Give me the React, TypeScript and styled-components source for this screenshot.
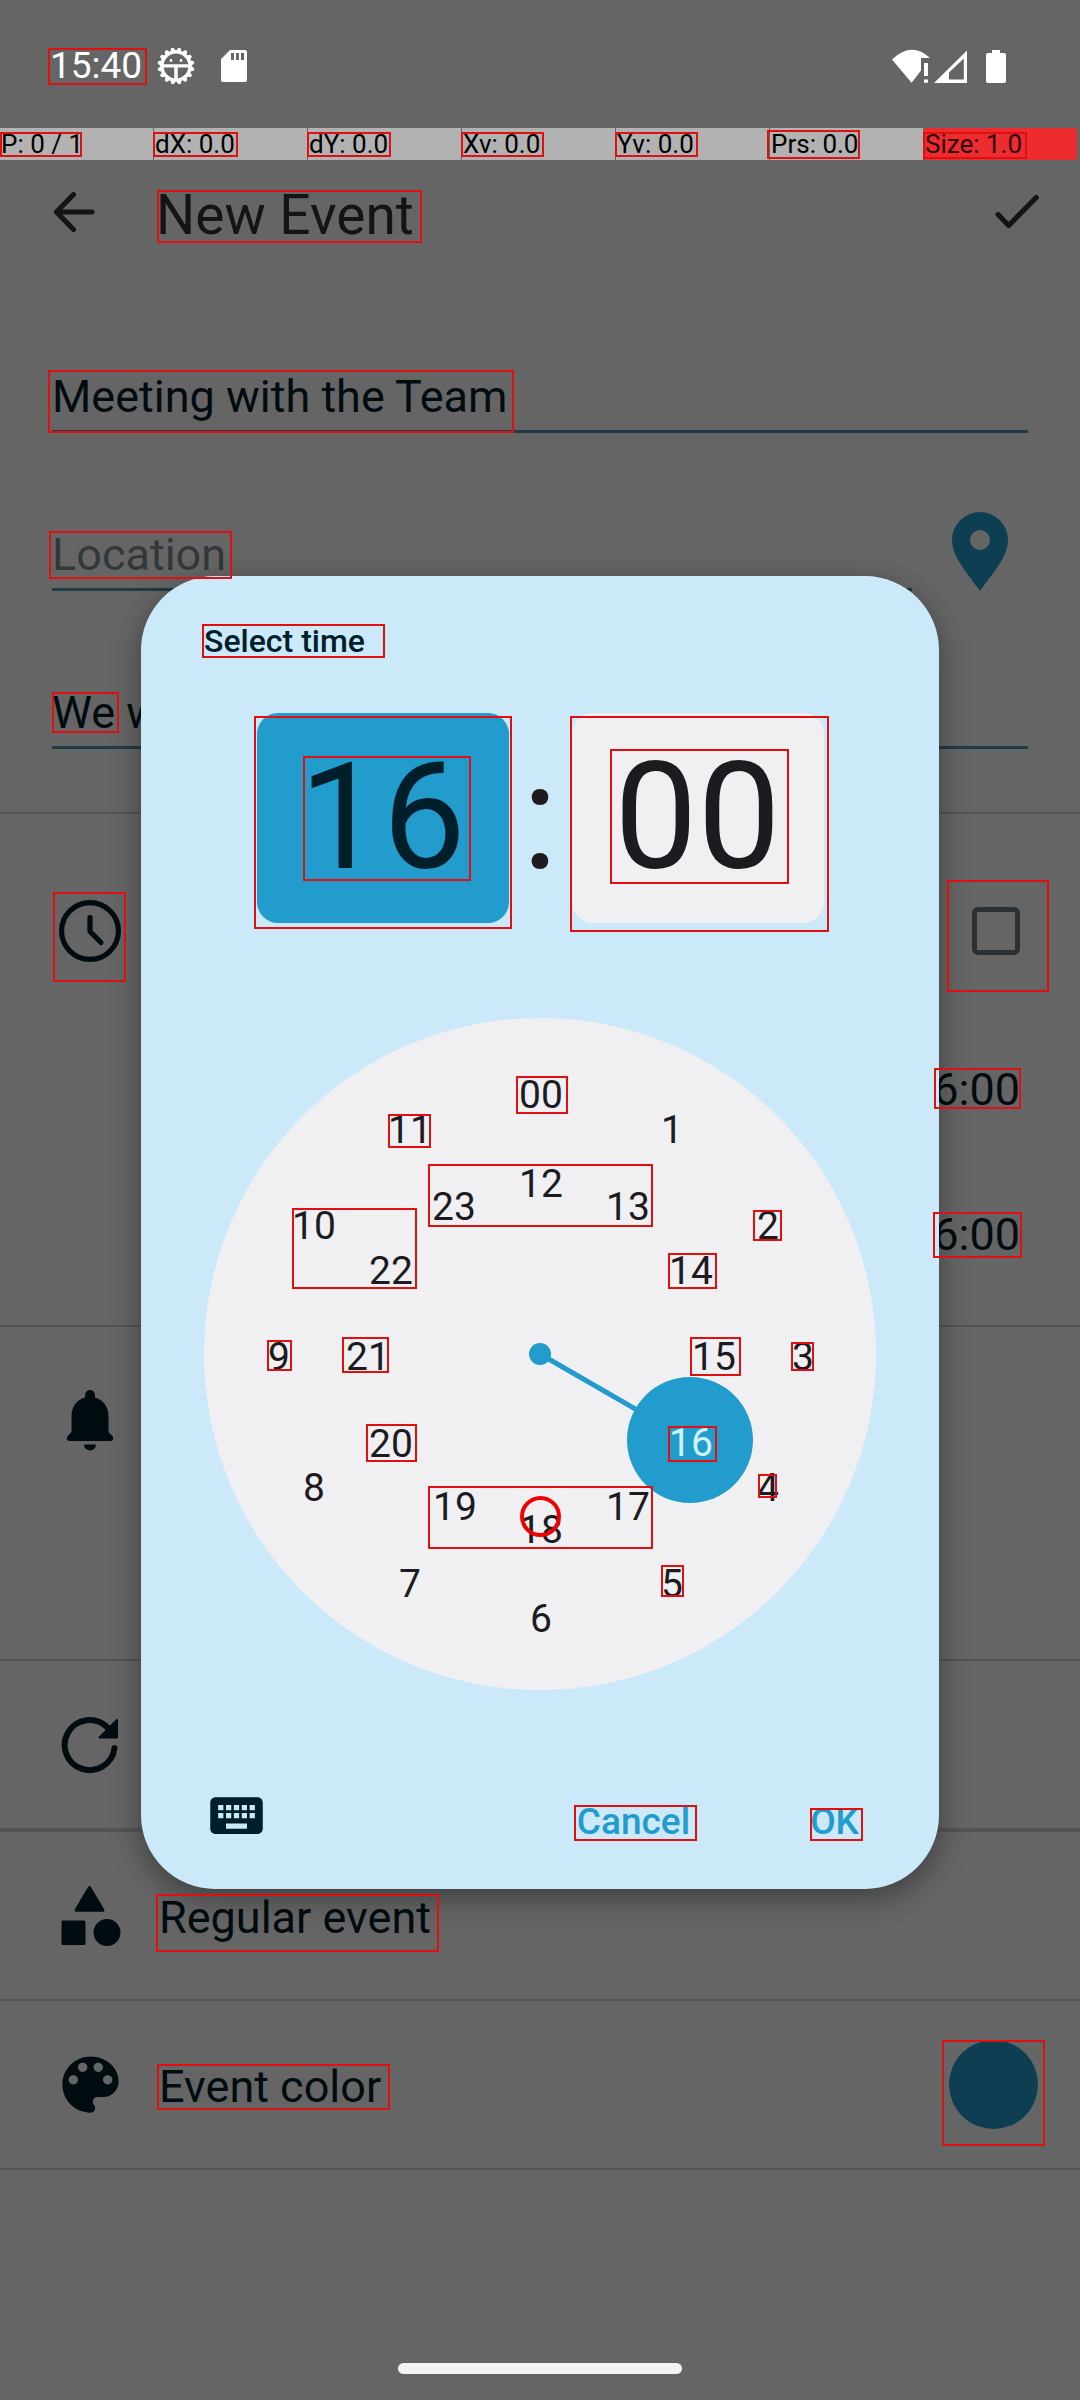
import React from "react";
import styled, { createGlobalStyle } from "styled-components";
import { MdKeyboard } from "react-icons/md";

const color = {
  page: "#fdfdfd",
  ink: "#001f2a",
  title: "#343434",
  primary: "#229bcd",
  underline: "#4e93b0",
  divider: "#d2d2d2",
  sheet: "#cce9fa",
  face: "#f0f0f3",
  digit: "#1c1b1f",
  mark: "#e01010",
};

const GlobalStyle = createGlobalStyle`
  *, *::before, *::after { box-sizing: border-box; }
  body { margin: 0; background: ${color.page}; font-family: Roboto, "Liberation Sans", sans-serif; }
  button, input { font: inherit; color: inherit; }
  button { border: 0; padding: 0; background: none; cursor: pointer; }
`;

const Screen = styled.div`
  position: relative;
  min-height: 100vh;
  overflow: hidden;
  color: ${color.ink};
`;

/* ---------- system bars ---------- */

const StatusBar = styled.header`
  position: relative;
  z-index: 2;
  display: flex;
  align-items: center;
  justify-content: space-between;
  height: 128px;
  padding: 4px 74px 0 50px;
  color: #fff;
`;

const StatusGroup = styled.div<{ $gap: number }>`
  display: flex;
  align-items: center;
  gap: ${(p) => p.$gap}px;
`;

const Clock = styled.time`
  font-size: 37px;
  line-height: 44px;
`;

const PointerBar = styled.div`
  position: relative;
  z-index: 2;
  display: grid;
  grid-template-columns: repeat(7, 1fr);
  gap: 1px;
  height: 32px;
  padding-right: 3px;
`;

const PointerCell = styled.span<{ $alert?: boolean }>`
  padding-left: 1px;
  font-size: 26px;
  line-height: 32px;
  white-space: nowrap;
  color: ${(p) => (p.$alert ? "#2e0607" : "#000")};
  background: ${(p) => (p.$alert ? "#ec2c2e" : "#b2b2b2")};
`;

const HomeHandle = styled.div`
  position: absolute;
  z-index: 4;
  left: 50%;
  bottom: 26px;
  width: 284px;
  height: 11px;
  margin-left: -142px;
  border-radius: 6px;
  background: #f3f3f3;
`;

/* ---------- event form ---------- */

const AppBar = styled.div`
  display: flex;
  align-items: center;
  height: 104px;
  padding: 0 15px 0 26px;
  color: ${color.title};
`;

const BarButton = styled.button`
  display: flex;
  align-items: center;
  justify-content: center;
  width: 96px;
  height: 96px;
`;

const Title = styled.h1`
  flex: 1;
  margin: 0;
  padding: 6px 0 0 34px;
  font-size: 55px;
  font-weight: 400;
  line-height: 64px;
`;

const Fields = styled.div`
  display: flex;
  flex-direction: column;
  gap: 96px;
  padding: 107px 52px 63px;
  border-bottom: 2px solid ${color.divider};
`;

const FieldRow = styled.div`
  display: flex;
  align-items: flex-end;
  height: 62px;
`;

const Field = styled.input`
  flex: 1;
  min-width: 0;
  height: 62px;
  padding: 0 0 9px;
  border: 0;
  border-bottom: 3px solid ${color.underline};
  border-radius: 0;
  outline: 0;
  background: none;
  font-size: 45px;
  line-height: 50px;
  &::placeholder {
    color: ${color.ink};
    opacity: 0.5;
  }
`;

const PinButton = styled.button`
  display: flex;
  align-items: flex-end;
  height: 60px;
  margin: 0 20px 0 40px;
  color: ${color.primary};
`;

const Section = styled.section<{ $pad?: string; $line?: number }>`
  padding: ${(p) => p.$pad ?? "0"};
  border-bottom: ${(p) => p.$line ?? 2}px solid ${color.divider};
`;

const Row = styled.div<{ $height: number; $right?: number }>`
  display: flex;
  align-items: center;
  gap: 31px;
  height: ${(p) => p.$height}px;
  padding: 0 ${(p) => p.$right ?? 60}px 0 52px;
`;

const IconSlot = styled.span`
  display: flex;
  justify-content: center;
  width: 76px;
`;

const RowLabel = styled.span`
  flex: 1;
  padding-top: 4px;
  font-size: 45px;
  line-height: 52px;
`;

const TimeButton = styled.button`
  font-size: 45px;
  line-height: 52px;
`;

const Tick = styled.input`
  appearance: none;
  width: 48px;
  height: 48px;
  margin: 0 0 0 auto;
  border: 5px solid #697980;
  border-radius: 6px;
`;

const TimeRows = styled.div`
  padding-top: 14px;
`;

const TimeRow = styled(Row)`
  justify-content: flex-end;
`;

const Swatch = styled.button`
  width: 89px;
  height: 89px;
  border-radius: 50%;
  background: ${color.primary};
`;

/* ---------- time picker ---------- */

const Scrim = styled.div`
  position: absolute;
  z-index: 1;
  inset: 0;
  display: flex;
  align-items: center;
  justify-content: center;
  padding: 128px 0 63px;
  background: rgba(0, 0, 0, 0.6);
`;

const Dialog = styled.section`
  padding: 46px 63px 21px;
  border-radius: 74px;
  background: ${color.sheet};
  box-shadow: 0 9px 30px rgba(0, 0, 0, 0.38);
`;

const DialogTitle = styled.h2`
  margin: 0;
  font-size: 32px;
  font-weight: 500;
  line-height: 38px;
`;

const TimeDisplay = styled.div`
  display: flex;
  justify-content: center;
  margin: 53px 0 95px;
`;

const TimeChip = styled.button<{ $active?: boolean }>`
  width: 252px;
  height: 210px;
  border-radius: 21px;
  font-size: 148px;
  line-height: 210px;
  color: ${(p) => (p.$active ? color.ink : color.digit)};
  background: ${(p) => (p.$active ? color.primary : color.face)};
`;

const Colon = styled.span`
  width: 63px;
  font-size: 148px;
  line-height: 210px;
  text-align: center;
  color: ${color.digit};
`;

const Face = styled.div`
  position: relative;
  width: 672px;
  height: 672px;
  border-radius: 50%;
  background: ${color.face};
`;

const Hand = styled.svg`
  display: block;
`;

const Hour = styled.button<{ $x: number; $y: number; $active?: boolean }>`
  position: absolute;
  left: ${(p) => p.$x}px;
  top: ${(p) => p.$y}px;
  width: 64px;
  height: 48px;
  margin: -24px 0 0 -32px;
  font-size: 39px;
  line-height: 48px;
  text-align: center;
  color: ${(p) => (p.$active ? "#d0f4ff" : color.digit)};
`;

const Actions = styled.div`
  display: flex;
  align-items: center;
  justify-content: space-between;
  height: 105px;
  margin-top: 73px;
`;

const KeyboardButton = styled.button`
  display: flex;
  align-items: center;
  justify-content: center;
  width: 64px;
  height: 64px;
`;

const TextButtons = styled.div`
  display: flex;
  gap: 120px;
  padding: 12px 17px 0 0;
`;

const TextButton = styled.button`
  font-size: 37px;
  font-weight: 500;
  line-height: 44px;
  color: ${color.primary};
`;

/* ---------- detection overlay ---------- */

const Overlay = styled.div`
  position: absolute;
  z-index: 3;
  inset: 0;
  pointer-events: none;
`;

const Mark = styled.span<{ $box: number[] }>`
  position: absolute;
  left: ${(p) => p.$box[0]}px;
  top: ${(p) => p.$box[1]}px;
  width: ${(p) => p.$box[2] - p.$box[0]}px;
  height: ${(p) => p.$box[3] - p.$box[1]}px;
  border: 2px solid ${color.mark};
`;

const Touch = styled.span`
  position: absolute;
  left: 520px;
  top: 1496px;
  width: 41px;
  height: 41px;
  border: 4px solid #f00000;
  border-radius: 50%;
`;

/* Each mark is left, top, right, bottom. */
const marks = [
  [48, 48, 147, 85],
  [0, 132, 82, 157],
  [153, 132, 238, 157],
  [307, 132, 391, 157],
  [461, 132, 544, 157],
  [615, 132, 698, 157],
  [767, 130, 860, 159],
  [923, 132, 1027, 159],
  [157, 190, 422, 243],
  [48, 370, 514, 433],
  [49, 531, 232, 579],
  [52, 692, 119, 733],
  [202, 624, 385, 658],
  [254, 716, 512, 929],
  [303, 756, 471, 881],
  [570, 716, 829, 932],
  [610, 749, 789, 884],
  [53, 892, 126, 982],
  [947, 880, 1049, 992],
  [934, 1068, 1021, 1109],
  [933, 1212, 1022, 1258],
  [516, 1076, 568, 1114],
  [388, 1114, 431, 1148],
  [428, 1164, 653, 1227],
  [292, 1208, 417, 1289],
  [753, 1210, 782, 1241],
  [668, 1253, 717, 1289],
  [267, 1340, 292, 1371],
  [342, 1337, 389, 1373],
  [690, 1337, 741, 1376],
  [791, 1342, 814, 1371],
  [366, 1424, 417, 1462],
  [668, 1426, 717, 1462],
  [758, 1474, 777, 1498],
  [428, 1486, 653, 1549],
  [661, 1565, 684, 1597],
  [574, 1805, 697, 1841],
  [810, 1808, 863, 1841],
  [156, 1894, 439, 1952],
  [157, 2064, 390, 2110],
  [942, 2040, 1045, 2146],
];

const pointerValues = ["P: 0 / 1", "dX: 0.0", "dY: 0.0", "Xv: 0.0", "Yv: 0.0", "Prs: 0.0", "Size: 1.0"];

const CENTER = 336;
const RINGS = [
  { radius: 262, first: 0 },
  { radius: 173, first: 12 },
];

const hours = RINGS.flatMap(({ radius, first }) =>
  Array.from({ length: 12 }, (_, i) => {
    const angle = (i * Math.PI) / 6;
    return {
      label: first + i === 0 ? "00" : String(first + i),
      x: Math.round(CENTER + 1 + radius * Math.sin(angle)),
      y: Math.round(CENTER + 3 - radius * Math.cos(angle)),
    };
  })
);

const teeth = Array.from({ length: 16 }, (_, i) => i * 22.5);

const DebugIcon = () => (
  <svg width="38" height="38" viewBox="-19 -19 38 38" aria-hidden="true">
    <circle r="14" fill="none" stroke="#fff" strokeWidth="3.2" />
    {teeth.map((a) => (
      <path key={a} d="M-3.2-14.2-1.2-18.4h2.4L3.2-14.2z" fill="#fff" transform={`rotate(${a + 11})`} />
    ))}
    <path d="M-13-1.8h26v3.4H1.8V14h-3.6V1.6H-13z" fill="#fff" />
    <circle cx="-5" cy="-5.5" r="1.4" fill="#fff" />
    <circle cx="5" cy="-5.5" r="1.4" fill="#fff" />
  </svg>
);

const CardIcon = () => (
  <svg width="26" height="32" viewBox="0 0 26 32" aria-hidden="true">
    <path
      fill="#fff"
      fillRule="evenodd"
      d="M9 0H24a2 2 0 0 1 2 2V30a2 2 0 0 1-2 2H2a2 2 0 0 1-2-2V9zM10 3v7h3V3zM15 3v7h3V3zM20 3v7h3V3z"
    />
  </svg>
);

const SignalIcons = () => (
  <svg width="114" height="34" viewBox="892 46 114 34" fill="#fff" aria-label="Network and battery">
    <path d="M892 56.5Q911.5 38 930 55H921V67.5L911.6 79.7z" />
    <path d="M924 60h4v13h-4zM924 76.5h4v3.2h-4z" />
    <path fillRule="evenodd" d="M934 80 967 47.500V80zM949 69.500V76.500H963.800V55.500z" />
    <path d="M992 47h8v3h4a2 2 0 0 1 2 2v26a2 2 0 0 1-2 2h-16a2 2 0 0 1-2-2V52a2 2 0 0 1 2-2h4z" />
  </svg>
);

const BackIcon = () => (
  <svg width="42" height="42" viewBox="0 0 42 42" fill="none" stroke="currentColor" strokeWidth="5.2" strokeLinecap="round" strokeLinejoin="round">
    <path d="M39 21H3.500M20.500 3.500 3.500 21 20.500 38.500" />
  </svg>
);

const CheckIcon = () => (
  <svg width="44" height="36" viewBox="0 0 44 36" fill="none" stroke="currentColor" strokeWidth="5.2" strokeLinecap="round" strokeLinejoin="round">
    <path d="M3 20.500 13.700 31.500 41.200 3.500" />
  </svg>
);

const PinIcon = () => (
  <svg width="56" height="79" viewBox="0 0 56 79" fill="currentColor">
    <path fillRule="evenodd" d="M28 0A28 28 0 0 1 56 28C56 45 40 62 28 79 16 62 0 45 0 28A28 28 0 0 1 28 0zM28 18a10 10 0 1 0 0 20 10 10 0 0 0 0-20z" />
  </svg>
);

const ClockIcon = () => (
  <svg width="62" height="62" viewBox="0 0 62 62" fill="none" stroke="currentColor" strokeWidth="5.2" strokeLinecap="round" strokeLinejoin="round">
    <circle cx="31" cy="31" r="28.4" />
    <path d="M31 17.500V31.500L42 42.500" />
  </svg>
);

const BellIcon = () => (
  <svg width="48" height="62" viewBox="0 0 48 62" fill="currentColor">
    <path d="M24 0a5 5 0 0 1 5 5v2.500C37 9.500 42.500 16.500 42.500 26V42l3.800 4c2 2.500.700 5-1.800 5h-41C1 51-.300 48.500 1.700 46l3.800-4V26C5.500 16.500 11 9.500 19 7.500V5a5 5 0 0 1 5-5zM18 54.500h12a6 6 0 0 1-12 0z" />
  </svg>
);

const RepeatIcon = () => (
  <svg width="58" height="58" viewBox="0 0 58 58">
    <path d="M53.500 32A25 25 0 1 1 46 11" fill="none" stroke="currentColor" strokeWidth="6" strokeLinecap="round" />
    <path d="M57 4v17.500a1 1 0 0 1-1 1H38.500c-1 0-1.400-1-.700-1.700L55.300 3.300c.700-.700 1.700-.300 1.700.700z" fill="currentColor" />
  </svg>
);

const ShapesIcon = () => (
  <svg width="62" height="62" viewBox="-2 0 62 62" fill="currentColor" stroke="currentColor" strokeWidth="3" strokeLinejoin="round">
    <path d="M28.500 2.500 42 25.200H15z" />
    <path d="M2 37h21v21.500H2z" />
    <circle cx="46" cy="47.5" r="12" />
  </svg>
);

const PaletteIcon = () => (
  <svg width="75" height="75" viewBox="0 0 24 24" fill="currentColor">
    <path d="M12 3c-4.970 0-9 4.030-9 9s4.030 9 9 9c.830 0 1.500-.670 1.500-1.500 0-.390-.150-.740-.390-1.010-.230-.260-.380-.610-.380-.990 0-.830.670-1.500 1.500-1.500H16c2.760 0 5-2.240 5-5 0-4.420-4.030-8-9-8zm-5.500 9c-.830 0-1.500-.670-1.500-1.500S5.670 9 6.500 9 8 9.670 8 10.500 7.330 12 6.500 12zm3-4C8.670 8 8 7.330 8 6.500S8.670 5 9.500 5s1.500.670 1.500 1.500S10.330 8 9.500 8zm5 0c-.830 0-1.500-.670-1.500-1.500S13.670 5 14.500 5s1.500.670 1.500 1.500S15.330 8 14.500 8zm3 4c-.830 0-1.500-.670-1.500-1.500S16.670 9 17.500 9s1.500.670 1.500 1.500-.670 1.500-1.500 1.500z" />
  </svg>
);

export default function App() {
  return (
    <Screen>
      <GlobalStyle />

      <StatusBar>
        <StatusGroup $gap={15}>
          <Clock>15:40</Clock>
          <StatusGroup $gap={26}>
            <DebugIcon />
            <CardIcon />
          </StatusGroup>
        </StatusGroup>
        <SignalIcons />
      </StatusBar>

      <PointerBar>
        {pointerValues.map((value) => (
          <PointerCell key={value} $alert={value.startsWith("Size")}>
            {value}
          </PointerCell>
        ))}
      </PointerBar>

      <main>
        <AppBar>
          <BarButton aria-label="Back">
            <BackIcon />
          </BarButton>
          <Title>New Event</Title>
          <BarButton aria-label="Save">
            <CheckIcon />
          </BarButton>
        </AppBar>

        <Fields>
          <FieldRow>
            <Field aria-label="Title" defaultValue="Meeting with the Team" />
          </FieldRow>
          <FieldRow>
            <Field aria-label="Location" placeholder="Location" />
            <PinButton aria-label="Show on map">
              <PinIcon />
            </PinButton>
          </FieldRow>
          <FieldRow>
            <Field aria-label="Description" defaultValue="We w" />
          </FieldRow>
        </Fields>

        <Section $pad="44px 0 18px">
          <Row $height={145}>
            <IconSlot>
              <ClockIcon />
            </IconSlot>
            <Tick type="checkbox" aria-label="All-day" />
          </Row>
          <TimeRows>
            <TimeRow $height={145}>
              <TimeButton aria-label="Start time">16:00</TimeButton>
            </TimeRow>
            <TimeRow $height={145}>
              <TimeButton aria-label="End time">16:00</TimeButton>
            </TimeRow>
          </TimeRows>
        </Section>

        <Section $pad="10px 0 155px">
          <Row $height={167}>
            <IconSlot>
              <BellIcon />
            </IconSlot>
          </Row>
        </Section>

        <Section $line={4}>
          <Row $height={167}>
            <IconSlot>
              <RepeatIcon />
            </IconSlot>
          </Row>
        </Section>

        <Section>
          <Row $height={167}>
            <IconSlot>
              <ShapesIcon />
            </IconSlot>
            <RowLabel>Regular event</RowLabel>
          </Row>
        </Section>

        <Section>
          <Row $height={167} $right={42}>
            <IconSlot>
              <PaletteIcon />
            </IconSlot>
            <RowLabel>Event color</RowLabel>
            <Swatch aria-label="Change event color" />
          </Row>
        </Section>
      </main>

      <Scrim>
        <Dialog role="dialog" aria-labelledby="picker-title">
          <DialogTitle id="picker-title">Select time</DialogTitle>
          <TimeDisplay>
            <TimeChip $active>16</TimeChip>
            <Colon>:</Colon>
            <TimeChip>00</TimeChip>
          </TimeDisplay>
          <Face>
            <Hand width="672" height="672" viewBox="0 0 672 672" fill={color.primary} aria-hidden="true">
              <path d="M336 336 432 391.400" stroke={color.primary} strokeWidth="5" />
              <circle cx="336" cy="336" r="11" />
              <circle cx="486" cy="422" r="63" />
            </Hand>
            {hours.map(({ label, x, y }) => (
              <Hour key={label} $x={x} $y={y} $active={label === "16"}>
                {label}
              </Hour>
            ))}
          </Face>
          <Actions>
            <KeyboardButton aria-label="Switch to text input">
              <MdKeyboard size={63} />
            </KeyboardButton>
            <TextButtons>
              <TextButton>Cancel</TextButton>
              <TextButton>OK</TextButton>
            </TextButtons>
          </Actions>
        </Dialog>
      </Scrim>

      <Overlay aria-hidden="true">
        {marks.map((box) => (
          <Mark key={box.join()} $box={box} />
        ))}
        <Touch />
      </Overlay>
      <HomeHandle />
    </Screen>
  );
}
